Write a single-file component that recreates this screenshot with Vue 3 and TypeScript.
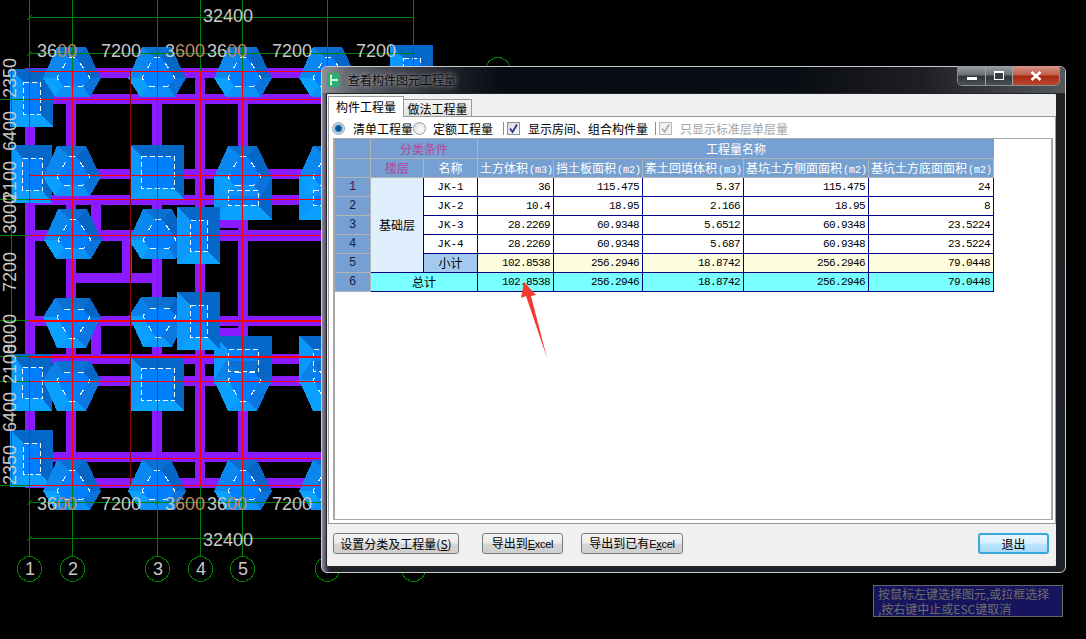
<script setup lang="ts">
type Pt = [number, number]
const pts = (a: Pt[], cx: number, cy: number, f: number) =>
  a.map(([x, y]) => `${cx + x},${cy + y * f}`).join(' ')

const O: Pt[] = [[-15, -25], [14, -25], [29, 6], [18, 25], [-17, 25], [-29, 6]]
const I: Pt[] = [[-3, -15], [4, -15], [18, 6], [11, 14], [-9, 14], [-15, 6]]
const upColors = ['#0a70d2', '#0566c8', '#0a74dc', '#0a90f8', '#0aa0ff', '#0a88f0']
const downColors = ['#0a98ff', '#0a78e0', '#0566c8', '#0a70d2', '#0a80e8', '#0aa0ff']

function hex(cx: number, cy: number, f: number) {
  const colors = f > 0 ? upColors : downColors
  const faces = [
    { p: [O[0], O[1], I[1], I[0]], c: colors[0] },
    { p: [O[1], O[2], I[2], I[1]], c: colors[1] },
    { p: [O[2], O[3], I[3], I[2]], c: colors[2] },
    { p: [O[3], O[4], I[4], I[3]], c: colors[3] },
    { p: [O[4], O[5], I[5], I[4]], c: colors[4] },
    { p: [O[5], O[0], I[0], I[5]], c: colors[5] },
  ].map((x) => ({ points: pts(x.p as Pt[], cx, cy, f), fill: x.c }))
  return { faces, core: pts(I, cx, cy, f) }
}

function square(x: number, y: number, w: number, h: number, i: number, j = i) {
  const a = x + w, b = y + h, ix = x + i, iy = y + j, ia = a - i, ib = b - j
  return {
    x, y, w, h, ix, iy, iw: w - 2 * i, ih: h - 2 * j,
    top: `${x},${y} ${a},${y} ${ia},${iy} ${ix},${iy}`,
    right: `${a},${y} ${a},${b} ${ia},${ib} ${ia},${iy}`,
    bottom: `${a},${b} ${x},${b} ${ix},${ib} ${ia},${ib}`,
    left: `${x},${b} ${x},${y} ${ix},${iy} ${ix},${ib}`,
  }
}

const squaresUnder = [
  square(10, 69, 43, 58, 13, 13),
  square(12, 145, 40, 58, 10, 13),
  square(131, 145, 53, 54, 10, 11),
  square(12, 354, 40, 57, 10, 13),
  square(131, 357, 53, 54, 10, 11),
  square(10, 430, 43, 57, 13, 13),
  square(390, 45, 43, 58, 13, 13),
]
const squaresCombo = [
  square(214, 175, 58, 45, 14, 15),
  square(299, 175, 58, 45, 14, 15),
  square(214, 336, 58, 48, 14, 13),
  square(299, 336, 58, 48, 14, 13),
]
const squaresOver = [
  square(177, 207, 43, 57, 13, 13),
  square(177, 292, 43, 58, 13, 13),
]
const hexes = [
  hex(72, 72, 1), hex(157, 72, 1), hex(243, 72, 1), hex(328, 72, 1),
  hex(72, 171, 1), hex(243, 171, 1), hex(328, 171, 1),
  hex(73, 234, 1), hex(158, 234, 1),
  hex(72, 323, -1), hex(158, 322, -1),
  hex(72, 386, -1), hex(243, 386, -1), hex(328, 386, -1),
  hex(72, 485, 1), hex(157, 485, 1), hex(243, 485, 1), hex(328, 485, 1),
]
const beamsH = [
  [30, 68, 300, 10], [30, 94, 300, 10], [30, 169, 300, 10], [30, 195, 300, 10],
  [25, 230, 300, 11], [76, 273, 86, 10], [25, 316, 300, 10], [25, 354, 300, 10],
  [25, 376, 300, 10], [25, 452, 300, 10], [25, 478, 300, 10], [195, 328, 53, 10], [195, 220, 53, 8],
]
const beamsV = [
  [25, 68, 10, 420], [66, 68, 10, 420], [152, 68, 10, 420], [195, 68, 10, 420], [238, 68, 10, 420],
  [122, 230, 10, 43], [91, 205, 10, 36], [91, 326, 10, 28],
]
const redH = [
  { y: 71, h: 1 }, { y: 99, h: 1 }, { y: 175, h: 1 }, { y: 199, h: 1 }, { y: 235, h: 1 },
  { y: 320, h: 2 }, { y: 356, h: 2 }, { y: 381, h: 1 }, { y: 458, h: 1 }, { y: 485, h: 1 },
]
const axisX = [29, 72, 157, 200, 242, 327, 413]
const redV = [29, 72, 157, 200, 242]
const extY = [99, 199, 235, 320, 356, 381, 485]
const bubbles = [
  { x: 29.5, n: '1' }, { x: 72.5, n: '2' }, { x: 157.5, n: '3' }, { x: 200.5, n: '4' }, { x: 242.5, n: '5' },
  { x: 327.5, n: '' }, { x: 413.5, n: '' },
]
function dodeca(cx: number, cy: number, r = 12.5) {
  return Array.from({ length: 12 }, (_, i) => {
    const t = (i * Math.PI) / 6 + Math.PI / 12
    return `${(cx + r * Math.cos(t)).toFixed(1)},${(cy + r * Math.sin(t)).toFixed(1)}`
  }).join(' ')
}
const sideDims = [
  { y: 78, t: '2350' }, { y: 131, t: '6400' }, { y: 181, t: '2100' }, { y: 214, t: '3000' },
  { y: 272, t: '7200' }, { y: 334, t: '8000' }, { y: 364, t: '2100' }, { y: 412, t: '6400' }, { y: 465, t: '2350' },
]
const dimsTop = [
  { x: 37, a: '36', b: '00' }, { x: 101, a: '7200', b: '' }, { x: 165, a: '3', b: '600' },
  { x: 207, a: '36', b: '00' }, { x: 272, a: '7200', b: '' }, { x: 356, a: '7200', b: '' },
]
const dimsBottom = dimsTop.slice(0, 5)

const cols = [36, 53, 54, 76, 89, 101, 125, 125]
const quantityHeads = [
  { t: '土方体积', u: '(m3)' }, { t: '挡土板面积', u: '(m2)' }, { t: '素土回填体积', u: '(m3)' },
  { t: '基坑土方侧面面积', u: '(m2)' }, { t: '基坑土方底面面积', u: '(m2)' },
]
const rows = [
  { name: 'JK-1', v: ['36', '115.475', '5.37', '115.475', '24'] },
  { name: 'JK-2', v: ['10.4', '18.95', '2.166', '18.95', '8'] },
  { name: 'JK-3', v: ['28.2269', '60.9348', '5.6512', '60.9348', '23.5224'] },
  { name: 'JK-4', v: ['28.2269', '60.9348', '5.687', '60.9348', '23.5224'] },
]
const sum = ['102.8538', '256.2946', '18.8742', '256.2946', '79.0448']
</script>

<template>
  <div class="screen">
    <svg class="cad" width="1086" height="639" viewBox="0 0 1086 639">
      <g shape-rendering="crispEdges">
        <rect v-for="(b, i) in beamsH" :key="'h' + i" :x="b[0]" :y="b[1]" :width="b[2]" :height="b[3]" fill="#8a1aff" />
        <rect v-for="(b, i) in beamsV" :key="'v' + i" :x="b[0]" :y="b[1]" :width="b[2]" :height="b[3]" fill="#8a1aff" />
        <g v-for="(s, i) in [...squaresUnder, ...squaresCombo]" :key="'s' + i">
          <rect :x="s.x" :y="s.y" :width="s.w" :height="s.h" fill="#0080ff" />
          <polygon :points="s.top" fill="#0568c8" />
          <polygon :points="s.right" fill="#0568c8" />
          <polygon :points="s.bottom" fill="#0aa0ff" />
          <polygon :points="s.left" fill="#0a98ff" />
          <rect :x="s.ix + 0.5" :y="s.iy + 0.5" :width="s.iw" :height="s.ih" fill="none" stroke="#fff" stroke-dasharray="5 3" />
        </g>
        <g v-for="(h, i) in hexes" :key="'p' + i">
          <polygon v-for="(f, k) in h.faces" :key="k" :points="f.points" :fill="f.fill" />
          <polygon :points="h.core" fill="#0080ff" stroke="#fff" stroke-dasharray="6 8" />
        </g>
        <rect
          v-for="(s, i) in squaresCombo"
          :key="'cd' + i"
          :x="s.ix + 0.5"
          :y="s.iy + 0.5"
          :width="s.iw"
          :height="s.ih"
          fill="none"
          stroke="#fff"
          stroke-dasharray="5 3"
        />
        <g v-for="(s, i) in squaresOver" :key="'o' + i">
          <rect :x="s.x" :y="s.y" :width="s.w" :height="s.h" fill="#0080ff" />
          <polygon :points="s.top" fill="#0568c8" />
          <polygon :points="s.right" fill="#0568c8" />
          <polygon :points="s.bottom" fill="#0aa0ff" />
          <polygon :points="s.left" fill="#0a98ff" />
          <rect :x="s.ix + 0.5" :y="s.iy + 0.5" :width="s.iw" :height="s.ih" fill="none" stroke="#fff" stroke-dasharray="5 3" />
        </g>
        <rect v-for="(x, i) in axisX" :key="'g' + i" :x="x" y="0" width="1" height="557" fill="#008000" />
        <rect x="29" y="17" width="385" height="1" fill="#008000" />
        <rect x="29" y="53" width="385" height="1" fill="#008000" />
        <rect x="29" y="502" width="400" height="1" fill="#008000" />
        <rect x="29" y="538" width="400" height="1" fill="#008000" />
        <rect x="11" y="67" width="1" height="418" fill="#008000" />
        <rect v-for="y in extY" :key="'e' + y" x="0" :y="y" width="30" height="1" fill="#008000" />
        <path d="M27 20l5-5M27 56l5-5M155 56l5-5M27 505l5-5M155 505l5-5M27 541l5-5" stroke="#008000" fill="none" />
        <rect v-for="(y, i) in redH" :key="'r' + i" x="29" :y="y.y" width="292" :height="y.h" fill="#ff0000" />
        <rect v-for="x in redV" :key="'q' + x" :x="x" y="71" width="1" height="414" fill="#ff0000" />
        <rect x="130" y="71" width="1" height="414" fill="#8b0000" />
        <polygon v-for="b in bubbles" :key="'c' + b.x" :points="dodeca(b.x, 569)" fill="#000" stroke="#008000" />
        <polygon :points="dodeca(498, 70)" fill="#000" stroke="#008000" />
      </g>
      <text class="dim" x="203" y="22">32400</text>
      <text class="dim" x="203" y="546">32400</text>
      <text v-for="(d, i) in dimsTop" :key="'t' + i" class="dim" :x="d.x" y="57">{{ d.a }}<tspan fill="#c08a68">{{ d.b }}</tspan></text>
      <text v-for="(d, i) in dimsBottom" :key="'b' + i" class="dim" :x="d.x" y="510">{{ d.a }}<tspan fill="#c08a68">{{ d.b }}</tspan></text>
      <text
        v-for="(d, i) in sideDims"
        :key="'d' + i"
        class="dim"
        text-anchor="middle"
        :x="15.5"
        :y="d.y"
        :transform="`rotate(-90 15.5 ${d.y})`"
      >{{ d.t }}</text>
      <text v-for="b in bubbles" :key="'n' + b.x" class="dim" text-anchor="middle" :x="b.x + 0.5" y="575">{{ b.n }}</text>
    </svg>

    <section class="dialog">
      <header class="titlebar">
        <svg class="appicon" width="13" height="14" viewBox="0 0 13 14">
          <rect width="13" height="14" rx="3" fill="#27b06c" />
          <path d="M4 3v8M4 7h5" stroke="#fff" stroke-width="1.4" fill="none" />
          <circle cx="4" cy="3" r="1.2" fill="#fff" />
          <circle cx="4" cy="11" r="1.2" fill="#fff" />
          <circle cx="9.5" cy="7" r="1.2" fill="#fff" />
        </svg>
        <span class="title">查看构件图元工程量</span>
        <div class="controls">
          <div class="ctl ctl-min"><i class="min-glyph"></i></div>
          <div class="ctl ctl-max"><i class="max-glyph"></i></div>
          <div class="ctl ctl-close">
            <svg width="12" height="10" viewBox="0 0 12 10">
              <path d="M1.5 1l9 8M10.5 1l-9 8" stroke="#fff" stroke-width="2.6" fill="none" />
            </svg>
          </div>
        </div>
      </header>

      <div class="body">
        <div class="tabs">
          <div class="tab tab-on">构件工程量</div>
          <div class="tab tab-off">做法工程量</div>
        </div>

        <div class="pane">
          <div class="toolbar">
            <span class="radio radio-on"></span>
            <span class="lbl lbl-a">清单工程量</span>
            <span class="radio"></span>
            <span class="lbl lbl-b">定额工程量</span>
            <span class="sep sep-a"></span>
            <span class="check">
              <svg width="11" height="11" viewBox="0 0 11 11"><path d="M2 5.5l2.6 3.5L9 1.5" stroke="#1c2f8a" stroke-width="1.7" fill="none" /></svg>
            </span>
            <span class="lbl lbl-c">显示房间、组合构件量</span>
            <span class="sep sep-b"></span>
            <span class="check check-off">
              <svg width="11" height="11" viewBox="0 0 11 11"><path d="M2 5.5l2.6 3.5L9 1.5" stroke="#b0b0b0" stroke-width="1.7" fill="none" /></svg>
            </span>
            <span class="lbl lbl-d">只显示标准层单层量</span>
          </div>

          <div class="gridbox">
            <table class="grid">
              <colgroup>
                <col v-for="(w, i) in cols" :key="i" :style="{ width: w + 'px' }" />
              </colgroup>
              <tbody>
                <tr class="first-row">
                  <th></th>
                  <th colspan="2" class="pink">分类条件</th>
                  <th colspan="5" class="head-all">工程量名称</th>
                </tr>
                <tr>
                  <th></th>
                  <th class="pink">楼层</th>
                  <th>名称</th>
                  <th v-for="h in quantityHeads" :key="h.t" class="qh">{{ h.t }}<span class="unit">{{ h.u }}</span></th>
                </tr>
                <tr v-for="(r, i) in rows" :key="r.name">
                  <th class="no" :class="{ 'no-first': i === 0 }">{{ i + 1 }}</th>
                  <td v-if="i === 0" rowspan="5" class="floor">基础层</td>
                  <td class="name">{{ r.name }}</td>
                  <td v-for="(v, k) in r.v" :key="k" class="num">{{ v }}</td>
                </tr>
                <tr>
                  <th class="no">5</th>
                  <td class="name subname">小计</td>
                  <td v-for="(v, k) in sum" :key="k" class="num subtotal">{{ v }}</td>
                </tr>
                <tr>
                  <th class="no">6</th>
                  <td colspan="2" class="total total-name">总计</td>
                  <td v-for="(v, k) in sum" :key="k" class="num total">{{ v }}</td>
                </tr>
              </tbody>
            </table>
          </div>
        </div>

        <footer class="footer">
          <button class="btn b1">设置分类及工程量(<u>S</u>)</button>
          <button class="btn b2">导出到<span class="latin"><u>E</u>xcel</span></button>
          <button class="btn b3">导出到已有<span class="latin">E<u>x</u>cel</span></button>
          <button class="btn exit">退出</button>
        </footer>
      </div>
    </section>

    <svg class="arrow" width="32" height="80" viewBox="0 0 32 80">
      <polygon points="9,4 21,17 16,18 32,80 11,18 6,20" fill="#f23a30" />
    </svg>

    <div class="status">
      <div class="status-line">按鼠标左键选择图元,或拉框选择</div>
      <div class="status-line">,按右键中止或ESC键取消</div>
    </div>
  </div>
</template>

<style scoped>
.screen {
  position: relative;
  width: 1086px;
  height: 639px;
  background: #000;
  overflow: hidden;
  font-family: "Noto Sans CJK SC", "Liberation Sans", sans-serif;
  font-size: 12px;
  color: #000;
}
.cad {
  position: absolute;
  left: 0;
  top: 0;
}
.dim {
  font-family: "Liberation Sans", sans-serif;
  font-size: 18px;
  fill: #c8c8c8;
}
.dialog {
  position: absolute;
  left: 321px;
  top: 66px;
  width: 745px;
  height: 507px;
  box-sizing: border-box;
  display: flex;
  flex-direction: column;
  border: 1px solid #c8ccd0;
  border-radius: 6px;
  background:
    linear-gradient(90deg, rgba(150, 150, 165, 0.9) 0, rgba(90, 70, 120, 0.7) 5px, rgba(0, 0, 0, 0) 8px),
    linear-gradient(180deg, #222 0, #1c2228 100%);
}
.titlebar {
  height: 26px;
  flex: none;
  display: flex;
  align-items: flex-start;
  padding-left: 5px;
  border-radius: 6px 6px 0 0;
  background: linear-gradient(90deg, #8e909a 0, #5e606a 30px, #3a3c44 90px, #1a1c24 140px, #0a0c14 180px, #0b0d14 480px, #1d1f24 600px, #55585c 745px);
}
.appicon {
  margin-top: 6px;
  flex: none;
}
.title {
  margin: 4px 0 0 8px;
  line-height: 18px;
  color: #0b0b0b;
  text-shadow: 0 0 6px rgba(200, 200, 200, 0.8), 0 0 3px rgba(170, 170, 170, 0.6);
}
.controls {
  margin: -1px 5px 0 auto;
  display: flex;
  height: 19px;
  border: 1px solid #8a8d90;
  border-top: 0;
  border-radius: 0 0 5px 5px;
  overflow: hidden;
}
.ctl {
  display: flex;
  align-items: center;
  justify-content: center;
  box-sizing: border-box;
}
.ctl-min {
  width: 28px;
  background: linear-gradient(180deg, #9a9da2 0, #6d7175 45%, #33373b 55%, #4b4f53 100%);
  border-right: 1px solid #a0a3a6;
}
.ctl-max {
  width: 27px;
  background: linear-gradient(180deg, #9a9da2 0, #6d7175 45%, #33373b 55%, #4b4f53 100%);
  border-right: 1px solid #a0a3a6;
}
.ctl-close {
  width: 46px;
  background: linear-gradient(180deg, #d8948a 0, #c2604f 45%, #a82810 55%, #b84a2e 100%);
}
.min-glyph {
  display: block;
  width: 10px;
  height: 3px;
  margin-top: 6px;
  background: #fff;
}
.max-glyph {
  display: block;
  width: 10px;
  height: 9px;
  box-sizing: border-box;
  border: 1px solid #fff;
  border-top-width: 2px;
  background: #3a3e42;
}
.body {
  flex: 1;
  margin: 0 8px 5px 4px;
  display: flex;
  flex-direction: column;
  min-height: 0;
  background: #f0f0f0;
  border: 1px solid #20242a;
  border-radius: 2px;
}
.tabs {
  height: 22px;
  flex: none;
  display: flex;
  align-items: flex-start;
  margin-left: 1px;
  padding-top: 2px;
  box-sizing: border-box;
}
.tab {
  box-sizing: border-box;
  border: 1px solid #9a9a9a;
  text-align: center;
}
.tab-on {
  position: relative;
  z-index: 1;
  width: 76px;
  height: 21px;
  line-height: 20px;
  background: #fff;
  border-bottom: 0;
}
.tab-off {
  width: 68px;
  height: 18px;
  margin-top: 3px;
  line-height: 17px;
  border-left: 0;
  background: linear-gradient(180deg, #f4f4f4 0, #e4e4e4 100%);
}
.pane {
  flex: 1;
  min-height: 0;
  margin-left: 1px;
  display: flex;
  flex-direction: column;
  background: #fff;
  border: 1px solid #9a9a9a;
}
.toolbar {
  height: 21px;
  flex: none;
  box-sizing: border-box;
  padding-top: 2px;
  display: flex;
  align-items: center;
}
.radio {
  flex: none;
  width: 13px;
  height: 13px;
  box-sizing: border-box;
  border: 1px solid #9aa0a6;
  border-radius: 50%;
  background: radial-gradient(circle at 60% 65%, #fff 0, #e4e6e8 60%, #c8cacc 100%);
}
.radio-on {
  margin-left: 3px;
  background: radial-gradient(circle, #08437c 0, #0f5f9e 34%, #7fb9de 50%, #e0e2e4 66%);
}
.lbl {
  white-space: nowrap;
  line-height: 16px;
}
.lbl-a { margin-left: 8px; }
.lbl-b { margin-left: 7px; }
.lbl-c { margin-left: 8px; }
.lbl-d { margin-left: 8px; color: #a4a4a4; }
.sep {
  flex: none;
  width: 1px;
  height: 13px;
  background: #8c8c8c;
}
.sep-a { margin-left: 10px; }
.sep-b { margin-left: 7px; }
.check {
  flex: none;
  width: 13px;
  height: 13px;
  margin-left: 3px;
  box-sizing: border-box;
  border: 1px solid #8e8f8f;
  background: linear-gradient(135deg, #dcdcdc 0, #f6f6f6 100%);
  display: flex;
}
.check-off {
  border-color: #b8b8b8;
  background: #f2f2f2;
}
.gridbox {
  flex: 1;
  min-height: 0;
  margin: 0 2px 3px 4px;
  border: 1px solid #a8a8a8;
  border-left-width: 2px;
  border-right-width: 2px;
  background: #fff;
}
.grid {
  table-layout: fixed;
  width: 659px;
  border-collapse: separate;
  border-spacing: 0;
  font-size: 12px;
}
.grid tr {
  height: 19px;
}
.grid tr.first-row {
  height: 20px;
}
.grid th,
.grid td {
  box-sizing: border-box;
  padding: 0;
  line-height: 16px;
  white-space: nowrap;
  overflow: hidden;
  font-weight: 400;
}
.grid th {
  background: #769fd2;
  color: #fff;
  text-align: center;
  border-right: 1px solid #b4b4b4;
  border-bottom: 1px solid #b4b4b4;
}
.head-all {
  border-right: 0 !important;
}
.pink {
  color: #b8469c !important;
}
.qh {
  text-align: left !important;
  padding-left: 2px !important;
}
.unit {
  font-family: "Liberation Mono", monospace;
  font-size: 10px;
  line-height: 1;
  margin-left: 1px;
}
.no {
  color: #10203a !important;
  font-family: "Liberation Mono", monospace;
  font-size: 12px;
}
.no-first {
  color: #5a0a5a !important;
}
.grid td {
  border-right: 1px solid #00008b;
  border-bottom: 1px solid #00008b;
}
.floor {
  background: #deeefd;
  text-align: center;
}
.name {
  text-align: center;
  font-family: "Liberation Mono", monospace;
  font-size: 11px;
}
.subname {
  background: #a3c9ef;
  font-family: "Noto Sans CJK SC", sans-serif;
  font-size: 12px;
}
.num {
  text-align: right;
  padding-right: 3px !important;
  font-family: "Liberation Mono", monospace;
  font-size: 11px;
  letter-spacing: -0.6px;
}
.subtotal {
  background: #fffde0;
}
.total {
  background: #78ffff;
}
.total-name {
  text-align: center;
}
.footer {
  height: 42px;
  flex: none;
  box-sizing: border-box;
  padding: 9px 7px 0 6px;
  display: flex;
  align-items: flex-start;
}
.btn {
  height: 21px;
  padding: 0;
  box-sizing: border-box;
  border: 1px solid #7c7c7c;
  border-radius: 3px;
  background: linear-gradient(180deg, #f4f4f4 0, #ececec 48%, #d6d6d6 52%, #cfcfcf 100%);
  font: inherit;
  line-height: 18px;
  color: #000;
  white-space: nowrap;
}
.b1 { width: 126px; }
.b2 { width: 81px; margin-left: 23px; }
.b3 { width: 102px; margin-left: 18px; }
.exit {
  width: 71px;
  margin-left: auto;
  border: 2px solid #3ba6dc;
  line-height: 16px;
  background: linear-gradient(180deg, #eaf6fd 0, #d9f0fc 48%, #bee6fd 52%, #a7d9f5 100%);
}
.latin {
  font-family: "Liberation Sans", sans-serif;
  font-size: 11px;
  letter-spacing: -0.3px;
}
.arrow {
  position: absolute;
  left: 515px;
  top: 278px;
}
.status {
  position: absolute;
  left: 873px;
  top: 585px;
  width: 190px;
  height: 32px;
  box-sizing: border-box;
  padding-left: 4px;
  background: #16145c;
  border: 1px solid #666;
  color: #6e6e6e;
  font-size: 12px;
  white-space: nowrap;
}
.status-line {
  height: 15px;
  line-height: 15px;
  overflow: hidden;
}
</style>

<style>
html,
body {
  margin: 0;
  background: #000;
}
</style>
